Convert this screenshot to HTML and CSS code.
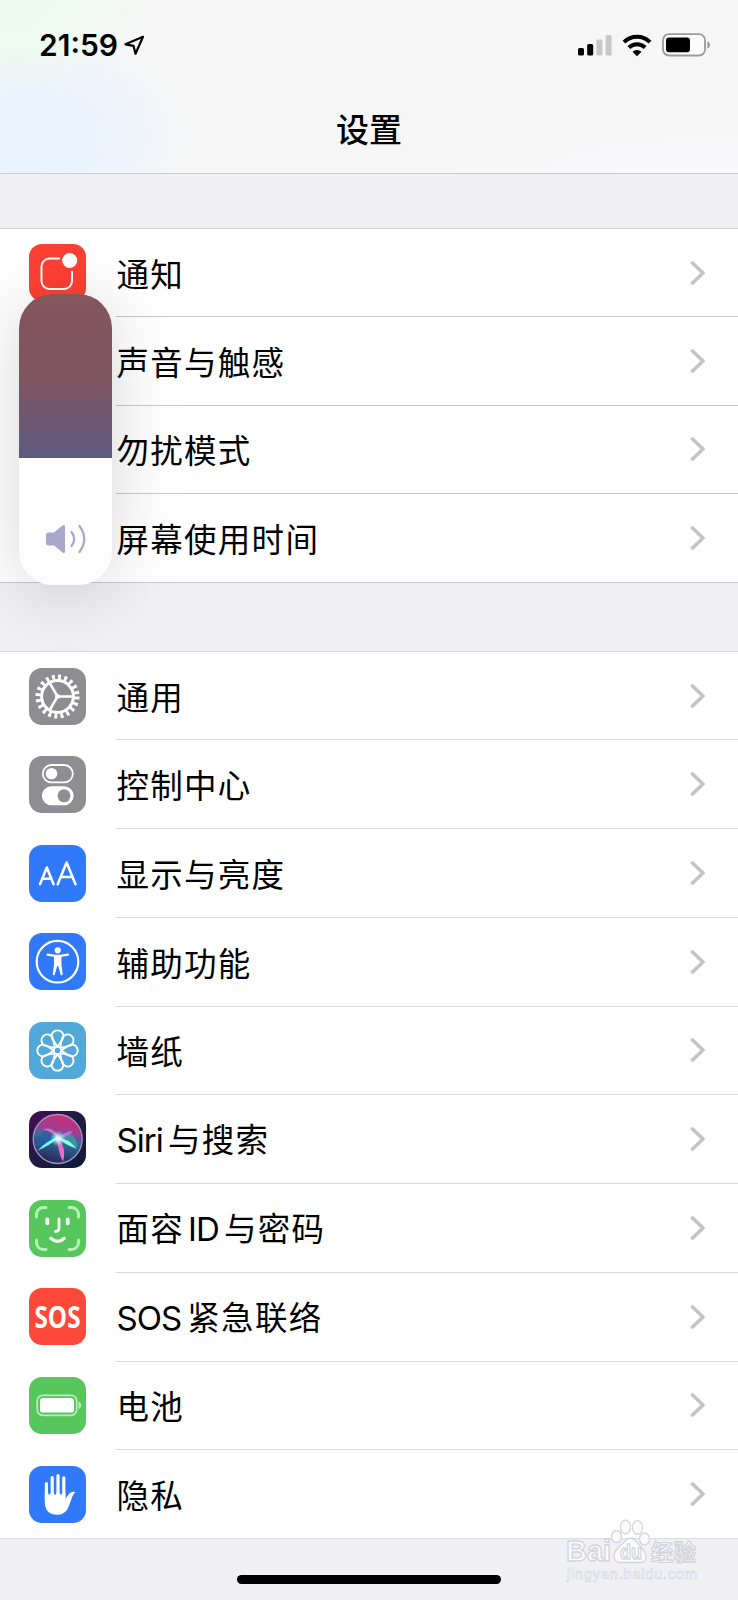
FILE: index.html
```
<!DOCTYPE html>
<html lang="zh-CN">
<head>
<meta charset="utf-8">
<title>设置</title>
<link rel="stylesheet" href="styles.css">
</head>
<body>
<div class="phone">
  <header class="header">
    <div class="status">
      <span class="time">21:59</span>
      <svg class="locate" width="21" height="21" viewBox="0 0 21 21"><path d="M19 1.800 1.500 9.300l8 1.500 2 8z" fill="none" stroke="#000" stroke-width="2.200" stroke-linejoin="round"/></svg>
      <div class="status-right">
        <svg width="34" height="22" viewBox="0 0 34 22"><rect x="0" y="14" width="6" height="7.600" rx="1.500"/><rect x="9.200" y="10" width="6" height="11.600" rx="1.500"/><g fill="#c8c8c8"><rect x="18.400" y="5.500" width="6" height="16.100" rx="1.500"/><rect x="27.600" y="1" width="6" height="20.600" rx="1.500"/></g></svg>
        <svg class="wifi" width="30" height="23" viewBox="0 0 30 23"><g fill="none" stroke="#000" stroke-width="4"><path d="M2 8.200a18.500 18.500 0 0 1 26 0"/><path d="M6.900 13.500a11.600 11.600 0 0 1 16.200 0"/></g><path d="M10.500 17.700a6.500 6.500 0 0 1 9 0L15 22.300z"/></svg>
        <svg class="batt" width="49" height="24" viewBox="0 0 49 24"><rect x="1" y="1.200" width="42" height="21.300" rx="6" fill="#fbfbfb" stroke="#9b9b9b" stroke-width="1.800"/><rect x="4" y="4.500" width="24" height="14.800" rx="3.200"/><path d="M45.500 8.200c3 1.200 3 6.200 0 7.400z" fill="#8f8f8f"/></svg>
      </div>
    </div>
    <h1 class="title">设置</h1>
  </header>

  <main>
    <ul class="group first">
      <li class="row"><svg class="icon" viewBox="0 0 57 57"><rect width="57" height="57" rx="13" fill="#fe4034"/><path d="M31 14.500H20.500a8 8 0 0 0-8 8V37a8 8 0 0 0 8 8H35a8 8 0 0 0 8-8V27" fill="none" stroke="#fff" stroke-width="2"/><circle cx="40.700" cy="16.500" r="7.500" fill="#fff"/></svg><div class="cell"><span>通知</span><svg class="chev" viewBox="0 0 16 26"><path d="M2.500 3 13 13 2.500 23"/></svg></div></li>
      <li class="row"><i class="icon"></i><div class="cell"><span>声音与触感</span><svg class="chev" viewBox="0 0 16 26"><path d="M2.500 3 13 13 2.500 23"/></svg></div></li>
      <li class="row"><i class="icon"></i><div class="cell"><span>勿扰模式</span><svg class="chev" viewBox="0 0 16 26"><path d="M2.500 3 13 13 2.500 23"/></svg></div></li>
      <li class="row"><i class="icon"></i><div class="cell"><span>屏幕使用时间</span><svg class="chev" viewBox="0 0 16 26"><path d="M2.500 3 13 13 2.500 23"/></svg></div></li>
    </ul>

    <ul class="group second">
      <li class="row"><svg class="icon" viewBox="0 0 57 57"><rect width="57" height="57" rx="13" fill="#8e8d92"/><g fill="none" stroke="#fff"><circle cx="28.500" cy="28.500" r="19.300" stroke-width="5.400" stroke-dasharray="2.900 3.163"/><circle cx="28.500" cy="28.500" r="15.900" stroke-width="3"/><path d="M28.500 28.500H44M28.500 28.500 20.700 15M28.500 28.500 20.700 42" stroke-width="2.500"/></g><circle cx="28.500" cy="28.500" r="2.400" fill="#fff"/></svg><div class="cell"><span>通用</span><svg class="chev" viewBox="0 0 16 26"><path d="M2.500 3 13 13 2.500 23"/></svg></div></li>
      <li class="row"><svg class="icon" viewBox="0 0 57 57"><rect width="57" height="57" rx="13" fill="#8e8d92"/><rect x="13.800" y="9" width="30" height="17.400" rx="8.700" fill="none" stroke="#fff" stroke-width="1.800"/><circle cx="22.500" cy="17.700" r="5.800" fill="#fff"/><rect x="12.900" y="30.300" width="31.800" height="19" rx="9.500" fill="#fff"/><circle cx="35" cy="39.800" r="6.500" fill="#8e8d92"/></svg><div class="cell"><span>控制中心</span><svg class="chev" viewBox="0 0 16 26"><path d="M2.500 3 13 13 2.500 23"/></svg></div></li>
      <li class="row"><svg class="icon" viewBox="0 0 57 57"><rect width="57" height="57" rx="13" fill="#3079fb"/><g fill="none" stroke="#fff" stroke-width="2.500" stroke-linecap="round" stroke-linejoin="round"><path d="M11 39.300 17.800 22.500 24.600 39.300M13.400 33.800h8.800"/><path d="M28.700 39.300 37.600 17.500 46.500 39.300M31.700 32h11.800"/></g></svg><div class="cell"><span>显示与亮度</span><svg class="chev" viewBox="0 0 16 26"><path d="M2.500 3 13 13 2.500 23"/></svg></div></li>
      <li class="row"><svg class="icon" viewBox="0 0 57 57"><rect width="57" height="57" rx="13" fill="#3079fb"/><circle cx="28.500" cy="28.700" r="20.800" fill="none" stroke="#fff" stroke-width="2.200"/><circle cx="28.700" cy="17.300" r="3.100" fill="#fff"/><path d="M18.600 21.700 26 22.800h5.500l7.400-1.100" fill="none" stroke="#fff" stroke-width="2.300" stroke-linecap="round"/><path d="M25 22.500h7.400v9l1.300 9.700q-.5 2-2 .5l-2.500-8.700h-1l-2.500 8.700q-1.500 1.500-2-.5L25 31.500z" fill="#fff"/></svg><div class="cell"><span>辅助功能</span><svg class="chev" viewBox="0 0 16 26"><path d="M2.500 3 13 13 2.500 23"/></svg></div></li>
      <li class="row"><svg class="icon" viewBox="0 0 57 57"><defs><path id="petal" d="M28.500 24.500 22.900 16.500A5.900 5.900 0 1 1 34.100 16.500Z"/></defs><rect width="57" height="57" rx="13" fill="#52a9d9"/><g fill="none" stroke="#fff" stroke-width="1.800" stroke-linejoin="round"><g id="petals"><path d="M28.500 24.500 23.200 16.500A5.900 5.900 0 1 1 33.800 16.500Z" stroke="none"/></g><path id="lobe" d="M28.500 24.800 23.200 16.800A5.900 5.900 0 1 1 33.800 16.800L28.500 24.800"/><use href="#lobe" transform="rotate(45 28.500 28.500)"/><use href="#lobe" transform="rotate(90 28.500 28.500)"/><use href="#lobe" transform="rotate(135 28.500 28.500)"/><use href="#lobe" transform="rotate(180 28.500 28.500)"/><use href="#lobe" transform="rotate(225 28.500 28.500)"/><use href="#lobe" transform="rotate(270 28.500 28.500)"/><use href="#lobe" transform="rotate(315 28.500 28.500)"/><circle cx="28.500" cy="28.500" r="3.700"/></g></svg><div class="cell"><span>墙纸</span><svg class="chev" viewBox="0 0 16 26"><path d="M2.500 3 13 13 2.500 23"/></svg></div></li>
      <li class="row"><svg class="icon" viewBox="0 0 57 57"><defs>
        <linearGradient id="sbg" x2="1" y2="1"><stop stop-color="#470d52"/><stop offset=".5" stop-color="#201a43"/><stop offset="1" stop-color="#0c1c38"/></linearGradient>
        <linearGradient id="orb" x1=".6" x2=".35" y2="1"><stop stop-color="#ca2c72"/><stop offset=".3" stop-color="#a43b90"/><stop offset=".5" stop-color="#306e9c"/><stop offset="1" stop-color="#272153"/></linearGradient>
        <radialGradient id="glow"><stop stop-color="#fff"/><stop offset=".35" stop-color="#d8fff9" stop-opacity=".8"/><stop offset="1" stop-color="#78e4ec" stop-opacity="0"/></radialGradient></defs>
        <rect width="57" height="57" rx="13" fill="url(#sbg)"/><circle cx="28.700" cy="28" r="24.500" fill="url(#orb)" stroke="#a196bd" stroke-width="1.300"/>
        <path d="M29 27C22 13 13 20 6 35c7 1 17-2 23-8" fill="#235fae" opacity=".75"/><path d="M29 27c9-10 18-3 20 9-6 1-14-3-20-9" fill="#3e9ca4" opacity=".8"/>
        <path d="M29 27C24 22 19 20 14 18c6-2 14 1 15 9" fill="#ff78bd" opacity=".75"/><path d="M29 26Q19 29 8.500 39.500 20 35 29 27" fill="#72ffe8"/><path d="M27 26q12 1 21 12-13-5-21-12" fill="#8effe0"/><path d="M28 27q10 8 6 24-5-10-6-24" fill="#ee69c5"/><path d="M29 27q7-7 15-7-5 7-15 7" fill="#ae76dc"/><circle cx="29" cy="27.500" r="8" fill="url(#glow)"/></svg><div class="cell"><span><b class="latin siri">Siri</b>与搜索</span><svg class="chev" viewBox="0 0 16 26"><path d="M2.500 3 13 13 2.500 23"/></svg></div></li>
      <li class="row"><svg class="icon" viewBox="0 0 57 57"><rect width="57" height="57" rx="13" fill="#56c65d"/><g fill="none" stroke-linecap="round"><path d="M7.500 17v-2.500a7 7 0 0 1 7-7H17M40 7.500h2.500a7 7 0 0 1 7 7V17M49.500 40v2.500a7 7 0 0 1-7 7H40M17 49.500h-2.500a7 7 0 0 1-7-7V40" stroke="#b4f3b5" stroke-width="3"/><g stroke="#fff" stroke-width="3.200"><path d="M18.300 19.500v3.800M38.700 19.500v3.800" stroke-width="3.800"/><path d="M30 19v9.500q0 3-3.700 2.800" stroke-width="2.800"/><path d="M21.800 38.300q6.700 6 13.400 0"/></g></g></svg><div class="cell"><span>面容<b class="latin id">ID</b>与密码</span><svg class="chev" viewBox="0 0 16 26"><path d="M2.500 3 13 13 2.500 23"/></svg></div></li>
      <li class="row"><svg class="icon" viewBox="0 0 57 57"><rect width="57" height="57" rx="13" fill="#fe483a"/><text class="sos-mark" x="28.500" y="39.500" text-anchor="middle" textLength="46" lengthAdjust="spacingAndGlyphs">SOS</text></svg><div class="cell"><span><b class="latin sos">SOS</b>紧急联络</span><svg class="chev" viewBox="0 0 16 26"><path d="M2.500 3 13 13 2.500 23"/></svg></div></li>
      <li class="row"><svg class="icon" viewBox="0 0 57 57"><rect width="57" height="57" rx="13" fill="#56c65d"/><rect x="8.200" y="18.300" width="39.500" height="20" rx="5.500" fill="none" stroke="#b9eebb" stroke-width="1.700"/><rect x="11" y="21" width="34" height="14.600" rx="3.200" fill="#fff"/><path d="M49.500 24.500c3.600 1 3.600 6.600 0 7.600z" fill="#b9eebb"/></svg><div class="cell"><span>电池</span><svg class="chev" viewBox="0 0 16 26"><path d="M2.500 3 13 13 2.500 23"/></svg></div></li>
      <li class="row"><svg class="icon" viewBox="0 0 57 57"><rect width="57" height="57" rx="13" fill="#3079fb"/><g stroke="#fff" stroke-width="3.200" stroke-linecap="round"><path d="M17.400 17.500V33M23.200 11.500V33M29 9.700V33M34.800 11.800V33"/></g><path d="M15.800 27h20.600v5.500l4.200-5.300q2.300-2.200 5.900-1.200-2.300 1.700-3.200 4.800L40 39.500q-3 9.300-11.500 9.300-12.700 0-12.700-13z" fill="#fff"/><path d="M20.300 17v11.500M26.100 17v11.500M31.900 17v11.500" stroke="#3079fb" stroke-width="1.800"/></svg><div class="cell"><span>隐私</span><svg class="chev" viewBox="0 0 16 26"><path d="M2.500 3 13 13 2.500 23"/></svg></div></li>
    </ul>
  </main>

  <div class="volume">
    <svg width="42" height="30" viewBox="0 0 42 30"><path d="M1 11q0-2.500 2.500-2.500H9L17.500 1.500Q20 0 20 2.500v25q0 2.500-2.500 1L9 21.500H3.500Q1 21.500 1 19z" fill="#a9a8cc"/><path d="M26.500 8q5.500 7 0 14M34.500 2q9.500 13 0 26" fill="none" stroke="#a9a8cc" stroke-width="2.200" stroke-linecap="round"/></svg>
  </div>
  <svg class="mark" width="150" height="70" viewBox="0 0 150 70">
    <g fill="#fafafc" stroke="#d4d4da" stroke-width="1.300">
      <ellipse cx="56.500" cy="26.500" rx="5" ry="6"/><ellipse cx="65.500" cy="17" rx="5" ry="6.800"/><ellipse cx="77.500" cy="17.500" rx="5" ry="6.800"/><ellipse cx="84.500" cy="29" rx="5" ry="6"/>
      <path d="M54 46c0-8 8-10 11-15q5-6 11 0c3 5 10 9 10 16 0 6-5 5.500-8 5.500H61c-4 0-7-1-7-6.500z"/>
      <text class="bai" x="6" y="51" textLength="45" lengthAdjust="spacingAndGlyphs">Bai</text><text class="du" x="60" y="49" textLength="22" lengthAdjust="spacingAndGlyphs">du</text><text class="jy" x="91" y="50" textLength="45">经验</text><text class="url" x="7" y="69" textLength="130">jingyan.baidu.com</text>
    </g>
  </svg>
  <div class="home"></div>
</div>
</body>
</html>
```
FILE: styles.css
```
* { box-sizing: border-box; }
body { margin: 0; background: #efeff4; color: #000; font-family: Inter, "Noto Sans CJK SC", sans-serif; }
.phone { position: relative; width: 738px; height: 1600px; overflow: hidden; background: #efeff4; }
.header {
  height: 174px;
  border-bottom: 1px solid #cbcbcf;
  background:
    radial-gradient(ellipse 150px 95px at 0 0, #edfbee 35%, transparent),
    radial-gradient(ellipse 165px 105px at 25px 135px, #e9f3ff 35%, transparent),
    radial-gradient(ellipse 260px 60px at 700px 174px, #fafafd, transparent),
    #f6f6f6;
}
.status { display: flex; align-items: center; height: 90px; padding: 0 27.500px 0 39px; }
.time { font-size: 30px; font-weight: 600; letter-spacing: 0; width: 82px; line-height: 36px; }
.locate { margin-left: 3px; }
.status-right { display: flex; align-items: center; margin-left: auto; }
.wifi { margin-left: 10px; }
.batt { margin-left: 10px; }
.title { margin: 16px 0 0; text-align: center; font-family: "Noto Sans CJK SC", sans-serif; font-size: 33px; line-height: 44px; font-weight: 500; }
.group { list-style: none; margin: 0; padding: 0; background: #fff; border-top: 1px solid #d4d4d9; border-bottom: 1px solid #c9c9ce; }
.first { margin-top: 54px; }
.second { margin-top: 68px; border-color: #dcdce0; }
.row { display: flex; height: 88.650px; padding-left: 29px; }
.second .row { height: 88.750px; }
.row:first-child { height: 88px; }
.first .row:last-child, .second .row:last-child { height: 88px; }
.icon { width: 57px; height: 57px; flex: none; margin-top: 15px; overflow: visible; }
.second .icon { margin-top: 15.500px; }
.cell { flex: 1; display: flex; align-items: center; justify-content: space-between; margin-left: 30px; padding-right: 32px; border-bottom: 1px solid #d9d9dc; }
.first .cell { border-color: #c8c8cb; }
.row:last-child .cell { border-bottom: 0; }
.cell span { font-family: "Noto Sans CJK SC", sans-serif; font-weight: 400; font-size: 32.500px; line-height: 44px; letter-spacing: 1.300px; margin-left: .4px; white-space: nowrap; }
.latin { font-family: Inter, sans-serif; font-weight: 400; font-size: 33px; letter-spacing: -.9px; }
.siri { margin-right: 5px; }
.id { margin: 0 5px 0 4px; }
.sos { margin-right: 6px; }
.chev { width: 16px; height: 26px; fill: none; stroke: #c4c4c6; stroke-width: 3.600px; stroke-linecap: round; stroke-linejoin: round; }
.sos-mark { font-family: "Open Sans", Inter, sans-serif; font-size: 30px; font-weight: 700; fill: #fff; }
.volume {
  position: absolute; left: 19px; top: 294px; width: 93px; height: 291px; border-radius: 34px;
  display: flex; justify-content: center; align-items: flex-end; padding-bottom: 31px;
  background: linear-gradient(#84565c 0, #7e5462 90px, #5c5a80 163.500px, #fefdfe 164px);
  box-shadow: 0 6px 70px rgba(0,0,0,.16);
}
.home { position: absolute; left: 237px; top: 1575px; width: 264px; height: 9px; border-radius: 5px; background: #000; }
.mark { position: absolute; left: 560px; top: 1510px; overflow: visible; }
.bai { font: 700 29px "Liberation Sans", sans-serif; }
.du { font: 700 21px "Liberation Sans", sans-serif; }
.jy { font: 700 22px "Noto Sans CJK SC", sans-serif; }
.url { font: 400 14.500px "Liberation Sans", sans-serif; stroke-width: .6px; }
```
